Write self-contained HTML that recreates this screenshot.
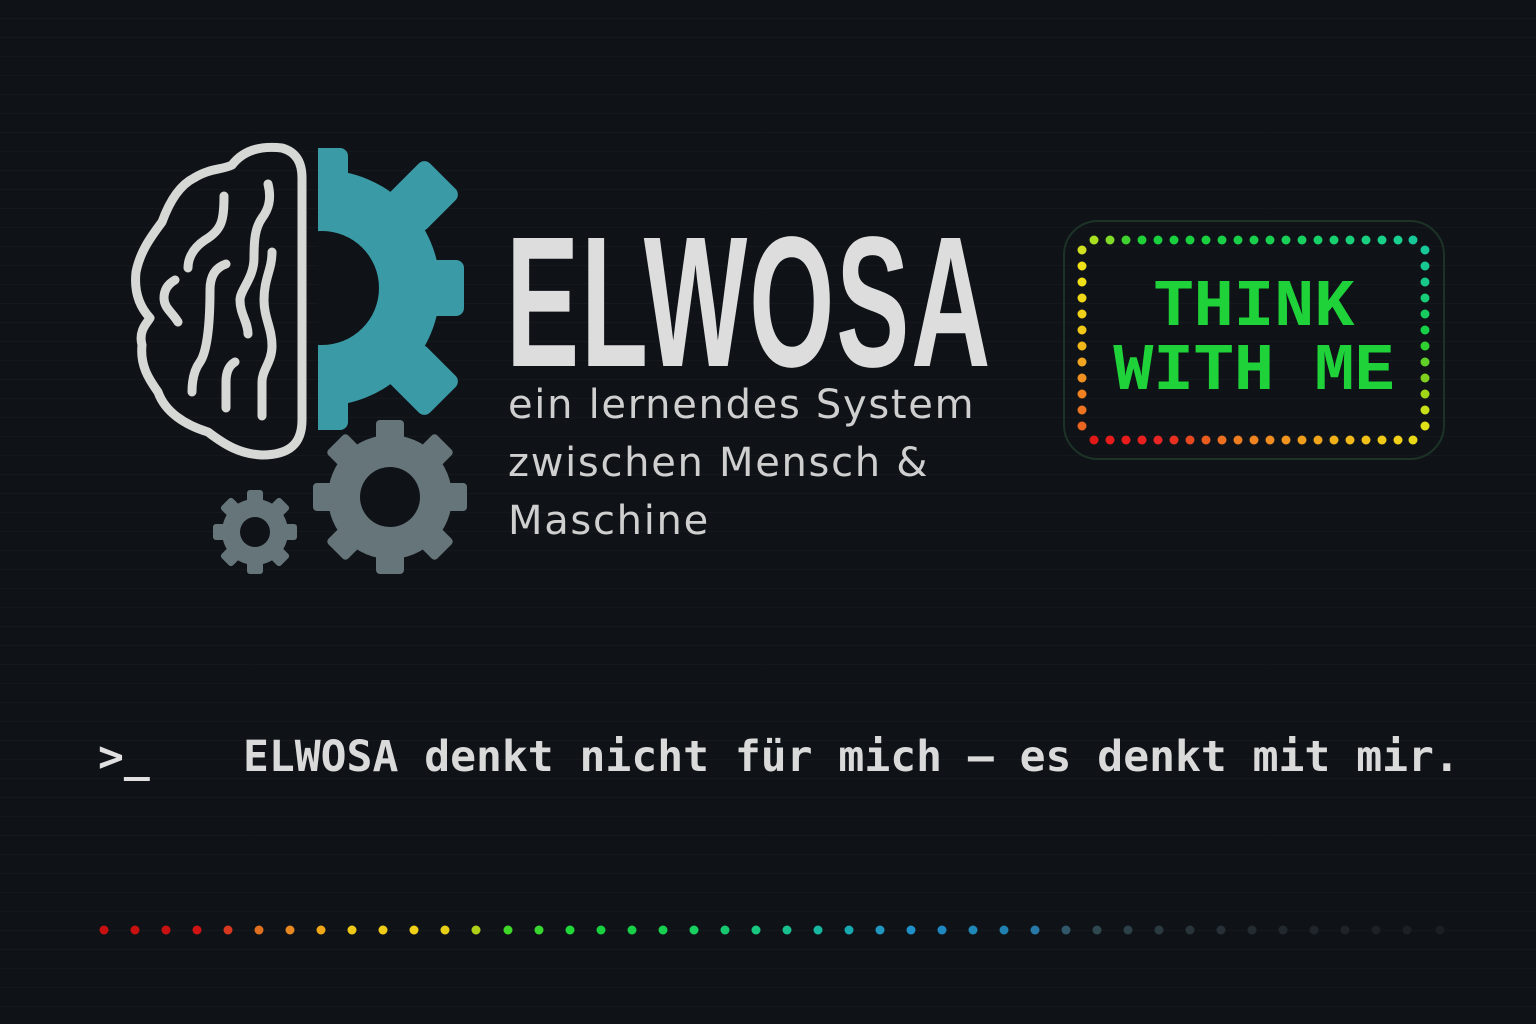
<!DOCTYPE html>
<html><head><meta charset="utf-8"><style>
html,body{margin:0;padding:0}
body{width:1536px;height:1024px;overflow:hidden;position:relative;background:#0f1317;
background-image:repeating-linear-gradient(180deg,transparent 0 18px,rgba(255,255,255,0.025) 18px 19px);}
.t{position:absolute;white-space:nowrap}
#title{left:506px;top:196px;font:bold 186px "Liberation Sans",sans-serif;color:#dddddd;transform:scaleX(0.59);transform-origin:0 0;letter-spacing:3px}
#sub{left:508px;top:376px;font:40px "DejaVu Sans",sans-serif;color:#cfcfcf;line-height:58px;letter-spacing:1.7px}
#think{left:1064px;top:276px;width:380px;text-align:center;font:bold 67px "Liberation Mono",monospace;color:#1fd23a;line-height:64px}
#tag{left:243px;top:732px;font:bold 43px "DejaVu Sans Mono","Liberation Mono",monospace;color:#dadada;letter-spacing:0}
#prompt{left:98px;top:732px;font:bold 43px "DejaVu Sans Mono",monospace;color:#e0e0e0}
</style></head><body>
<svg width="1536" height="1024" style="position:absolute;left:0;top:0">
<defs><clipPath id="c"><rect x="318" y="100" width="200" height="400"/></clipPath></defs>
<g clip-path="url(#c)" fill="#3a9aa6">
<circle cx="322" cy="288" r="118"/>
<rect x="296" y="148" width="52" height="60" rx="8"/>
<rect x="296" y="368" width="52" height="62" rx="8"/>
<rect x="410" y="260" width="54" height="56" rx="8"/>
<rect x="397" y="168" width="52" height="56" rx="8" transform="rotate(45 423 196)"/>
<rect x="397" y="352" width="52" height="56" rx="8" transform="rotate(-45 423 380)"/>
<circle cx="322" cy="288" r="57" fill="#0f1317"/>
</g>
<g fill="#66757a" transform="translate(390 497)">
<circle r="62"/>
<rect x="-14" y="-77" width="28" height="154" rx="4"/>
<rect x="-14" y="-77" width="28" height="154" rx="4" transform="rotate(45)"/>
<rect x="-14" y="-77" width="28" height="154" rx="4" transform="rotate(90)"/>
<rect x="-14" y="-77" width="28" height="154" rx="4" transform="rotate(135)"/>
<circle r="30" fill="#0f1317"/>
</g>
<g fill="#66757a" transform="translate(255 532)">
<circle r="33"/>
<rect x="-8" y="-42" width="16" height="84" rx="3"/>
<rect x="-8" y="-42" width="16" height="84" rx="3" transform="rotate(45)"/>
<rect x="-8" y="-42" width="16" height="84" rx="3" transform="rotate(90)"/>
<rect x="-8" y="-42" width="16" height="84" rx="3" transform="rotate(135)"/>
<circle r="15" fill="#0f1317"/>
</g>
<g fill="none" stroke="#d6d8d6" stroke-width="9" stroke-linecap="round" stroke-linejoin="round">
<path d="M232 165 C245 148 265 146 282 148 C296 152 302 162 302 178 L302 420 C302 445 288 455 262 455 C240 454 225 445 208 432 C185 425 165 412 158 392 C148 378 140 365 142 345 C138 330 148 322 150 318 C138 305 134 290 136 272 C140 252 150 238 162 222 C170 200 180 185 194 178 C210 168 222 170 232 165 Z"/>
<path d="M224 196 C224 220 222 230 205 240 C190 250 188 262 188 268"/>
<path d="M268 184 C272 200 268 210 262 218 C255 228 254 240 254 258 C254 278 240 290 240 300 C240 314 248 322 248 334"/>
<path d="M226 264 C214 268 210 278 210 290 C210 318 208 350 200 362 C194 370 192 380 192 392"/>
<path d="M175 280 C168 284 164 290 164 298 C164 308 172 312 178 322"/>
<path d="M272 252 C272 270 264 278 264 300 C264 318 272 328 272 346 C272 362 262 370 262 382 L262 416"/>
<path d="M235 362 C228 366 226 374 226 382 L226 408"/>
</g>
<rect x="1064" y="221" width="380" height="238" rx="34" fill="none" stroke="#1d3327" stroke-width="2"/>
<g>
<circle cx="1094" cy="240" r="4.5" fill="#a8e020"/><circle cx="1110" cy="240" r="4.5" fill="#80dc28"/><circle cx="1126" cy="240" r="4.5" fill="#40d030"/><circle cx="1142" cy="240" r="4.5" fill="#20d038"/><circle cx="1158" cy="240" r="4.5" fill="#18d040"/><circle cx="1174" cy="240" r="4.5" fill="#18d040"/><circle cx="1190" cy="240" r="4.5" fill="#18d040"/><circle cx="1206" cy="240" r="4.5" fill="#18d040"/><circle cx="1222" cy="240" r="4.5" fill="#18d045"/><circle cx="1238" cy="240" r="4.5" fill="#18d048"/><circle cx="1254" cy="240" r="4.5" fill="#18d04c"/><circle cx="1270" cy="240" r="4.5" fill="#18d050"/><circle cx="1286" cy="240" r="4.5" fill="#18d058"/><circle cx="1302" cy="240" r="4.5" fill="#18d060"/><circle cx="1318" cy="240" r="4.5" fill="#18d068"/><circle cx="1334" cy="240" r="4.5" fill="#18d070"/><circle cx="1350" cy="240" r="4.5" fill="#18d078"/><circle cx="1366" cy="240" r="4.5" fill="#18d080"/><circle cx="1382" cy="240" r="4.5" fill="#18d088"/><circle cx="1398" cy="240" r="4.5" fill="#18d090"/><circle cx="1413" cy="240" r="4.5" fill="#18c898"/>
<circle cx="1094" cy="440" r="4.5" fill="#e01818"/><circle cx="1110" cy="440" r="4.5" fill="#e81c1c"/><circle cx="1126" cy="440" r="4.5" fill="#e81c1c"/><circle cx="1142" cy="440" r="4.5" fill="#e82020"/><circle cx="1158" cy="440" r="4.5" fill="#e82424"/><circle cx="1174" cy="440" r="4.5" fill="#e83020"/><circle cx="1190" cy="440" r="4.5" fill="#e84820"/><circle cx="1206" cy="440" r="4.5" fill="#e85c20"/><circle cx="1222" cy="440" r="4.5" fill="#ec7020"/><circle cx="1238" cy="440" r="4.5" fill="#ee7c20"/><circle cx="1254" cy="440" r="4.5" fill="#f08420"/><circle cx="1270" cy="440" r="4.5" fill="#f08c20"/><circle cx="1286" cy="440" r="4.5" fill="#f09420"/><circle cx="1302" cy="440" r="4.5" fill="#f09c1c"/><circle cx="1318" cy="440" r="4.5" fill="#f0a41c"/><circle cx="1334" cy="440" r="4.5" fill="#f0b018"/><circle cx="1350" cy="440" r="4.5" fill="#f0b818"/><circle cx="1366" cy="440" r="4.5" fill="#f0c018"/><circle cx="1382" cy="440" r="4.5" fill="#f0c818"/><circle cx="1398" cy="440" r="4.5" fill="#f0d018"/><circle cx="1413" cy="440" r="4.5" fill="#e8d818"/>
<circle cx="1082" cy="250" r="4.5" fill="#d0e020"/><circle cx="1082" cy="266" r="4.5" fill="#f0e018"/><circle cx="1082" cy="282" r="4.5" fill="#f0e018"/><circle cx="1082" cy="298" r="4.5" fill="#f0d818"/><circle cx="1082" cy="314" r="4.5" fill="#f0d018"/><circle cx="1082" cy="330" r="4.5" fill="#f0c818"/><circle cx="1082" cy="346" r="4.5" fill="#f0b818"/><circle cx="1082" cy="362" r="4.5" fill="#f0a420"/><circle cx="1082" cy="378" r="4.5" fill="#f09020"/><circle cx="1082" cy="394" r="4.5" fill="#f08020"/><circle cx="1082" cy="410" r="4.5" fill="#ec7420"/><circle cx="1082" cy="426" r="4.5" fill="#e86420"/>
<circle cx="1425" cy="250" r="4.5" fill="#18c898"/><circle cx="1425" cy="266" r="4.5" fill="#18c890"/><circle cx="1425" cy="282" r="4.5" fill="#18c888"/><circle cx="1425" cy="298" r="4.5" fill="#18cc78"/><circle cx="1425" cy="314" r="4.5" fill="#18cc60"/><circle cx="1425" cy="330" r="4.5" fill="#18d048"/><circle cx="1425" cy="346" r="4.5" fill="#30d030"/><circle cx="1425" cy="362" r="4.5" fill="#60d028"/><circle cx="1425" cy="378" r="4.5" fill="#80d020"/><circle cx="1425" cy="394" r="4.5" fill="#a0d818"/><circle cx="1425" cy="410" r="4.5" fill="#c8e018"/><circle cx="1425" cy="426" r="4.5" fill="#e0e018"/>
</g>
<g>
<circle cx="104" cy="930" r="4.5" fill="#c81010"/><circle cx="135" cy="930" r="4.5" fill="#c81010"/><circle cx="166" cy="930" r="4.5" fill="#c81212"/><circle cx="197" cy="930" r="4.5" fill="#d01414"/><circle cx="228" cy="930" r="4.5" fill="#d83820"/><circle cx="259" cy="930" r="4.5" fill="#e07020"/><circle cx="290" cy="930" r="4.5" fill="#e88820"/><circle cx="321" cy="930" r="4.5" fill="#f0a818"/><circle cx="352" cy="930" r="4.5" fill="#f0c818"/><circle cx="383" cy="930" r="4.5" fill="#f0cc18"/><circle cx="414" cy="930" r="4.5" fill="#f0d018"/><circle cx="445" cy="930" r="4.5" fill="#e8d018"/><circle cx="476" cy="930" r="4.5" fill="#b0d018"/><circle cx="508" cy="930" r="4.5" fill="#40d828"/><circle cx="539" cy="930" r="4.5" fill="#38d830"/><circle cx="570" cy="930" r="4.5" fill="#20d838"/><circle cx="601" cy="930" r="4.5" fill="#18d040"/><circle cx="632" cy="930" r="4.5" fill="#18d048"/><circle cx="663" cy="930" r="4.5" fill="#18d050"/><circle cx="694" cy="930" r="4.5" fill="#18d060"/><circle cx="725" cy="930" r="4.5" fill="#18c870"/><circle cx="756" cy="930" r="4.5" fill="#18c880"/><circle cx="787" cy="930" r="4.5" fill="#18c090"/><circle cx="818" cy="930" r="4.5" fill="#18b8a0"/><circle cx="849" cy="930" r="4.5" fill="#18a8b0"/><circle cx="880" cy="930" r="4.5" fill="#2098c0"/><circle cx="911" cy="930" r="4.5" fill="#2090c8"/><circle cx="942" cy="930" r="4.5" fill="#2088c0"/><circle cx="973" cy="930" r="4.5" fill="#2088b8"/><circle cx="1004" cy="930" r="4.5" fill="#2080b0"/><circle cx="1035" cy="930" r="4.5" fill="#2878a8"/><circle cx="1066" cy="930" r="4.5" fill="#305868"/><circle cx="1097" cy="930" r="4.5" fill="#304850"/><circle cx="1128" cy="930" r="4.5" fill="#2c4048"/><circle cx="1159" cy="930" r="4.5" fill="#2a3a40"/><circle cx="1190" cy="930" r="4.5" fill="#28343a"/><circle cx="1221" cy="930" r="4.5" fill="#263036"/><circle cx="1252" cy="930" r="4.5" fill="#242c32"/><circle cx="1283" cy="930" r="4.5" fill="#22292e"/><circle cx="1314" cy="930" r="4.5" fill="#20262b"/><circle cx="1345" cy="930" r="4.5" fill="#1e2428"/><circle cx="1376" cy="930" r="4.5" fill="#1c2226"/><circle cx="1407" cy="930" r="4.5" fill="#1b2024"/><circle cx="1440" cy="930" r="4.5" fill="#1a1f23"/>
</g>
</svg>
<div class="t" id="title">ELWOSA</div>
<div class="t" id="sub">ein lernendes System<br>zwischen Mensch &amp;<br>Maschine</div>
<div class="t" id="think">THINK<br>WITH ME</div>
<div class="t" id="prompt">&gt;_</div>
<div class="t" id="tag">ELWOSA denkt nicht für mich – es denkt mit mir.</div>
</body></html>
